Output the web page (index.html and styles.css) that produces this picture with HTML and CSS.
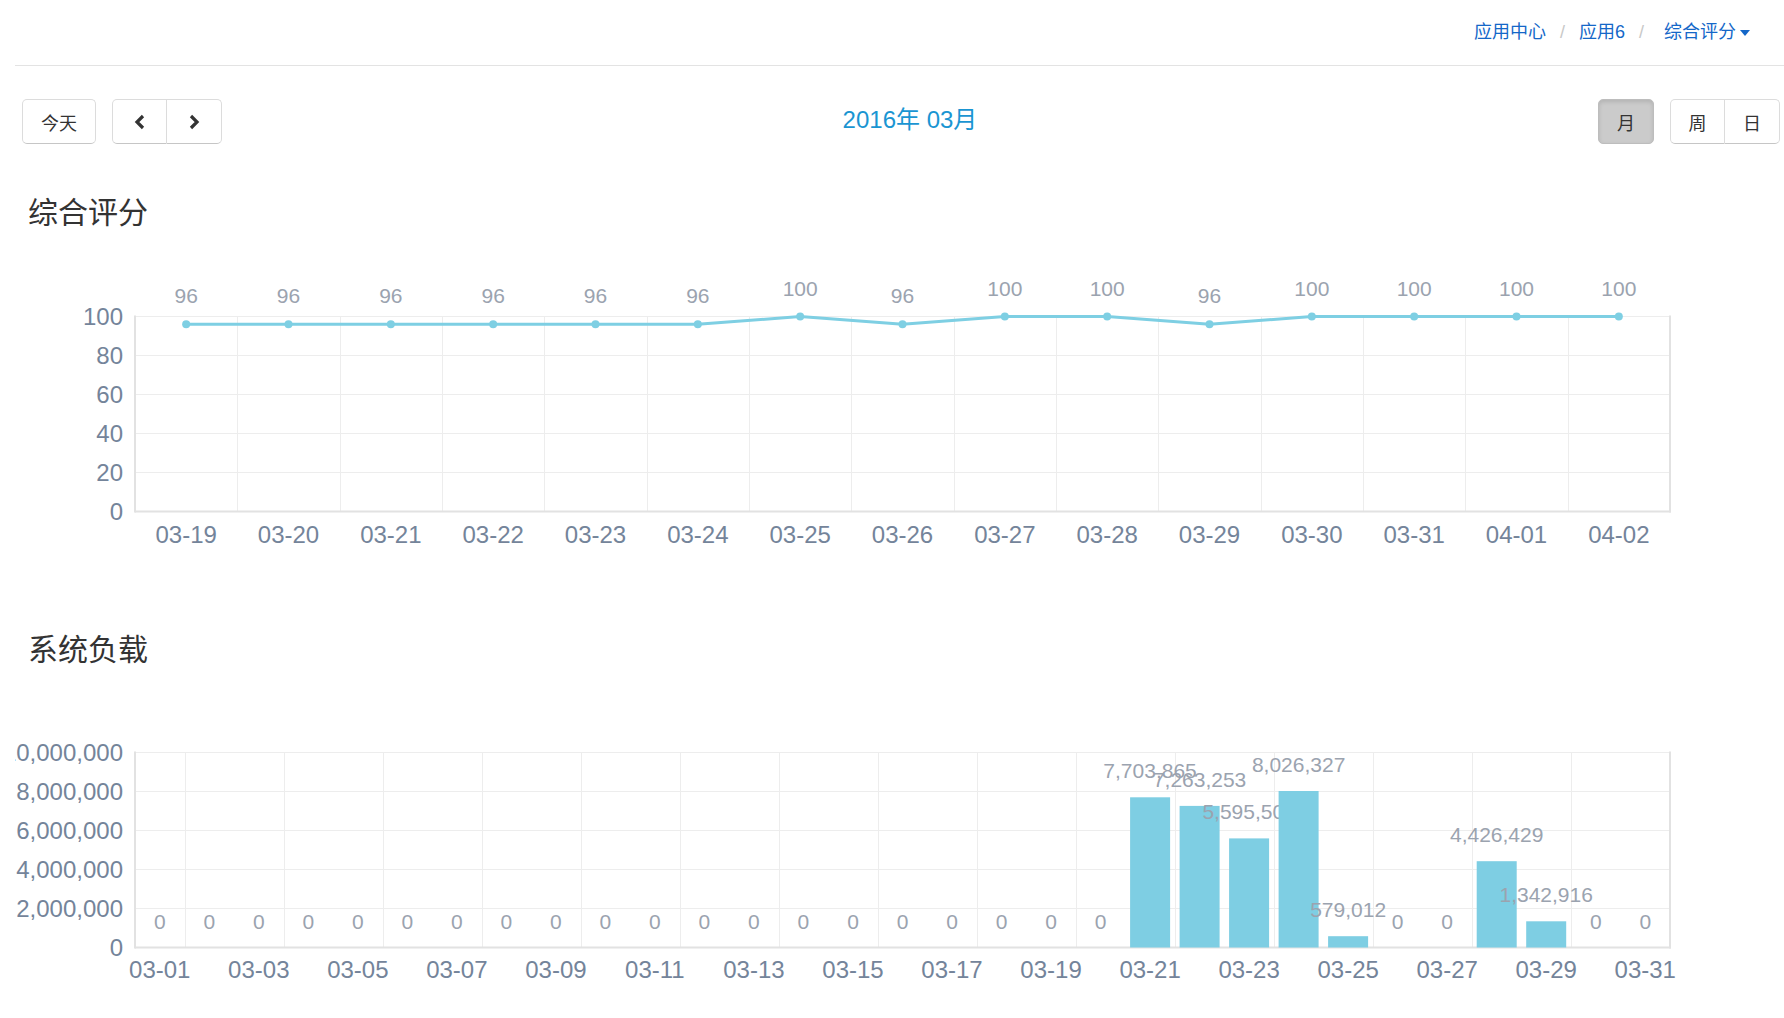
FILE: index.html
```html
<!DOCTYPE html>
<html lang="zh-CN">
<head>
<meta charset="utf-8">
<title>综合评分</title>
<link rel="stylesheet" href="styles.css">
</head>
<body>
<div class="page">
  <header class="topbar">
    <nav class="crumbs">
      <a class="crumb">应用中心</a>
      <span class="sep">/</span>
      <a class="crumb">应用6</a>
      <span class="sep sep-last">/</span>
      <a class="crumb crumb-drop">综合评分<span class="caret"></span></a>
    </nav>
  </header>

  <div class="toolbar">
    <div class="tool-left">
      <button class="btn btn-today">今天</button>
      <div class="btn-group">
        <button class="btn btn-nav btn-first" aria-label="上一月">
          <svg class="chev" width="12" height="16" viewBox="0 0 12 16"><polyline points="9,2 3,8 9,14"/></svg>
        </button>
        <button class="btn btn-nav btn-last" aria-label="下一月">
          <svg class="chev" width="12" height="16" viewBox="0 0 12 16"><polyline points="3,2 9,8 3,14"/></svg>
        </button>
      </div>
    </div>
    <h2 class="period">2016年 03月</h2>
    <div class="tool-right">
      <button class="btn btn-view active">月</button>
      <div class="btn-group">
        <button class="btn btn-view btn-first">周</button>
        <button class="btn btn-view btn-last">日</button>
      </div>
    </div>
  </div>

  <h3 class="section-title">综合评分</h3>
  <svg id="score-chart" class="chart chart-score" width="1769" height="330" viewBox="15 240 1769 330"></svg>

  <h3 class="section-title section-title-2">系统负载</h3>
  <svg id="load-chart" class="chart chart-load" width="1769" height="350" viewBox="15 667 1769 350"></svg>
</div>
<script src="script.js"></script>
</body>
</html>
```

FILE: styles.css
```css
html, body {
  margin: 0;
  padding: 0;
  background: #fff;
  overflow: hidden;
}
body {
  font-family: "Liberation Sans", "Noto Sans CJK SC", sans-serif;
  color: #333;
}
.page {
  padding-left: 15px;
}
.topbar {
  height: 65px;
  border-bottom: 1px solid #e3e3e3;
  display: flex;
  justify-content: flex-end;
  align-items: center;
  padding-right: 34px;
}
.crumbs {
  display: flex;
  align-items: center;
  font-size: 18px;
  line-height: 24px;
  position: relative;
  top: -1px;
}
.crumb {
  color: #1467c8;
  text-decoration: none;
  display: flex;
  align-items: center;
}
.sep {
  color: #c8c8c8;
  padding: 0 14px;
}
.sep-last {
  padding-right: 20px;
}
.caret {
  display: inline-block;
  width: 0;
  height: 0;
  margin-left: 4px;
  border-left: 5px solid transparent;
  border-right: 5px solid transparent;
  border-top: 6px solid #1467c8;
  margin-top: 2px;
}
.toolbar {
  margin-top: 33px;
  height: 45px;
  display: flex;
  justify-content: space-between;
  align-items: center;
  padding: 0 4px 0 7px;
}
.tool-left, .tool-right {
  display: flex;
  align-items: center;
  gap: 16px;
}
.btn-group {
  display: flex;
}
.btn {
  box-sizing: border-box;
  height: 45px;
  margin: 0;
  padding: 0;
  border: 1px solid #dcdcdc;
  border-bottom-color: #c6c6c6;
  border-radius: 5px;
  background: #fff;
  color: #333;
  font-family: "Liberation Sans", "Noto Sans CJK SC", sans-serif;
  font-size: 18px;
  display: flex;
  align-items: center;
  justify-content: center;
}
.btn-today {
  width: 74px;
}
.btn-nav {
  width: 55px;
}
.btn-view {
  width: 55px;
}
.btn-first {
  border-top-right-radius: 0;
  border-bottom-right-radius: 0;
}
.btn-last {
  border-top-left-radius: 0;
  border-bottom-left-radius: 0;
  border-left: none;
}
.btn-view.active {
  width: 56px;
  background: #cbcbcb;
  border-color: #bdbdbd;
  box-shadow: inset 0 2px 4px rgba(0, 0, 0, 0.12);
}
.chev polyline {
  fill: none;
  stroke: #333;
  stroke-width: 3.2;
  stroke-linejoin: miter;
  stroke-linecap: butt;
}
.period {
  margin: 0;
  font-size: 24px;
  font-weight: normal;
  color: #1a95d2;
  line-height: 30px;
  position: relative;
  top: -2px;
}
.section-title {
  margin: 46px 0 0 13px;
  font-size: 30px;
  line-height: 40px;
  font-weight: normal;
  color: #333;
  font-family: "Noto Sans CJK SC", sans-serif;
}
.section-title-2 {
  margin-top: 57px;
}
.chart {
  display: block;
}
.chart-score {
  margin-top: 10px;
}
.grid {
  stroke: #ededed;
  stroke-width: 1;
}
.axis {
  stroke: #e2e2e2;
  stroke-width: 2;
}
.axis-label {
  fill: #74849a;
  font-family: "Liberation Sans", sans-serif;
  font-size: 24px;
}
.val-label {
  fill: #9ba3af;
  font-family: "Liberation Sans", sans-serif;
  font-size: 21px;
}
.series-line {
  fill: none;
  stroke: #7ecfe3;
  stroke-width: 3;
  stroke-linejoin: round;
}
.dot {
  fill: #7ecfe3;
}
.bar {
  fill: #7ecee3;
}
```

FILE: script.js
```js
(function () {
  var NS = 'http://www.w3.org/2000/svg';
  function mk(parent, tag, attrs, text) {
    var e = document.createElementNS(NS, tag);
    for (var k in attrs) e.setAttribute(k, attrs[k]);
    if (text != null) e.textContent = text;
    parent.appendChild(e);
    return e;
  }
  function fmt(n) {
    return String(n).replace(/\B(?=(\d{3})+(?!\d))/g, ',');
  }
  function px(v) { return Math.round(v) + 0.5; }

  /* ---------- Chart 1: 综合评分 ---------- */
  var s1 = document.getElementById('score-chart');
  var dates1 = ['03-19','03-20','03-21','03-22','03-23','03-24','03-25','03-26','03-27','03-28','03-29','03-30','03-31','04-01','04-02'];
  var vals1 = [96,96,96,96,96,96,100,96,100,100,96,100,100,100,100];
  var X0 = 135, X1 = 1670, T = 316.5, H = 195, B = T + H;
  var n1 = vals1.length, w1 = (X1 - X0) / n1;
  var k, i;
  for (k = 0; k < 5; k++) {
    mk(s1, 'line', {x1: X0, x2: X1, y1: T + k * 39, y2: T + k * 39, 'class': 'grid'});
  }
  for (i = 1; i < n1; i++) {
    var gx = px(X0 + i * w1);
    mk(s1, 'line', {x1: gx, x2: gx, y1: T, y2: B, 'class': 'grid'});
  }
  mk(s1, 'line', {x1: X0, x2: X0, y1: T - 1, y2: B + 1, 'class': 'axis'});
  mk(s1, 'line', {x1: X1, x2: X1, y1: T - 1, y2: B + 1, 'class': 'axis'});
  mk(s1, 'line', {x1: X0, x2: X1 + 1, y1: B, y2: B, 'class': 'axis'});
  for (k = 0; k <= 5; k++) {
    mk(s1, 'text', {x: 123, y: T + k * 39 + 8.5, 'text-anchor': 'end', 'class': 'axis-label'}, String(100 - k * 20));
  }
  var pts = [];
  for (i = 0; i < n1; i++) {
    var cx = X0 + (i + 0.5) * w1;
    var cy = B - vals1[i] / 100 * H;
    pts.push(cx.toFixed(1) + ',' + cy.toFixed(1));
    mk(s1, 'text', {x: cx, y: 543, 'text-anchor': 'middle', 'class': 'axis-label'}, dates1[i]);
  }
  mk(s1, 'polyline', {points: pts.join(' '), 'class': 'series-line'});
  for (i = 0; i < n1; i++) {
    var dx = X0 + (i + 0.5) * w1;
    var dy = B - vals1[i] / 100 * H;
    mk(s1, 'circle', {cx: dx, cy: dy, r: 4, 'class': 'dot'});
    mk(s1, 'text', {x: dx, y: dy - 21, 'text-anchor': 'middle', 'class': 'val-label'}, String(vals1[i]));
  }

  /* ---------- Chart 2: 系统负载 ---------- */
  var s2 = document.getElementById('load-chart');
  var vals2 = [];
  for (i = 0; i < 31; i++) vals2.push(0);
  vals2[20] = 7703865; vals2[21] = 7263253; vals2[22] = 5595503; vals2[23] = 8026327;
  vals2[24] = 579012; vals2[27] = 4426429; vals2[28] = 1342916;
  var T2 = 752.5, B2 = T2 + H;
  var n2 = vals2.length, w2 = (X1 - X0) / n2;
  for (k = 0; k < 5; k++) {
    mk(s2, 'line', {x1: X0, x2: X1, y1: T2 + k * 39, y2: T2 + k * 39, 'class': 'grid'});
  }
  for (i = 1; i < n2; i += 2) {
    var gx2 = px(X0 + i * w2);
    mk(s2, 'line', {x1: gx2, x2: gx2, y1: T2, y2: B2, 'class': 'grid'});
  }
  mk(s2, 'line', {x1: X0, x2: X0, y1: T2 - 1, y2: B2 + 1, 'class': 'axis'});
  mk(s2, 'line', {x1: X1, x2: X1, y1: T2 - 1, y2: B2 + 1, 'class': 'axis'});
  mk(s2, 'line', {x1: X0, x2: X1 + 1, y1: B2, y2: B2, 'class': 'axis'});
  for (k = 0; k <= 5; k++) {
    var yv = (10 - k * 2) * 1000000;
    mk(s2, 'text', {x: 123, y: T2 + k * 39 + 8.5, 'text-anchor': 'end', 'class': 'axis-label'}, fmt(yv));
  }
  for (i = 0; i < n2; i += 2) {
    var d = i + 1;
    mk(s2, 'text', {x: X0 + (i + 0.5) * w2, y: 978, 'text-anchor': 'middle', 'class': 'axis-label'}, '03-' + (d < 10 ? '0' + d : d));
  }
  for (i = 0; i < n2; i++) {
    var bx = X0 + (i + 0.5) * w2;
    var top = B2 - vals2[i] / 10000000 * H;
    if (vals2[i] > 0) {
      mk(s2, 'rect', {x: (bx - 20).toFixed(1), y: top.toFixed(1), width: 40, height: (B2 - top).toFixed(1), 'class': 'bar'});
    }
    mk(s2, 'text', {x: bx, y: top - 19, 'text-anchor': 'middle', 'class': 'val-label'}, fmt(vals2[i]));
  }
})();
```
